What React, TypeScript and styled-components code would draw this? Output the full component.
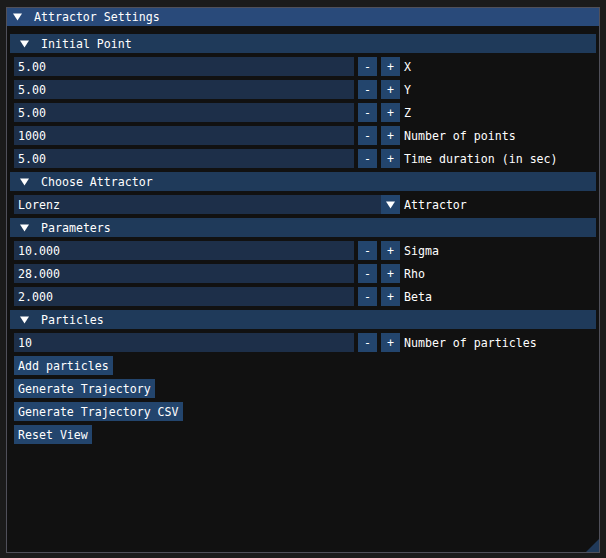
import React from "react";
import styled, { createGlobalStyle } from "styled-components";

const Global = createGlobalStyle`
  body {
    margin: 0;
    background: #1b1b1b;
    font-family: "DejaVu Sans Mono", "Liberation Mono", monospace;
    font-size: 11.6px;
    color: #ffffff;
  }
`;

const Arrow = ({ size = 9 }: { size?: number }) => (
  <svg width={size} height={8} viewBox="0 0 9 8">
    <polygon points="0,0.5 9,0.5 4.5,7.5" fill="#fff" />
  </svg>
);

const StepRow = ({ value, label }: { value: string; label: string }) => (
  <Row>
    <Field>{value}</Field>
    <SmallButton>-</SmallButton>
    <SmallButton>+</SmallButton>
    <Label>{label}</Label>
  </Row>
);

const App = () => {
  return (
    <>
      <Global />
      <Window>
        <TitleBar>
          <Arrow />
          <Caption>Attractor Settings</Caption>
        </TitleBar>
        <Body>
          <Header>
            <Arrow />
            <Caption>Initial Point</Caption>
          </Header>
          <StepRow value="5.00" label="X" />
          <StepRow value="5.00" label="Y" />
          <StepRow value="5.00" label="Z" />
          <StepRow value="1000" label="Number of points" />
          <StepRow value="5.00" label="Time duration (in sec)" />

          <Header>
            <Arrow />
            <Caption>Choose Attractor</Caption>
          </Header>
          <Row>
            <Combo>
              <ComboValue>Lorenz</ComboValue>
              <ComboButton>
                <Arrow />
              </ComboButton>
            </Combo>
            <Label>Attractor</Label>
          </Row>

          <Header>
            <Arrow />
            <Caption>Parameters</Caption>
          </Header>
          <StepRow value="10.000" label="Sigma" />
          <StepRow value="28.000" label="Rho" />
          <StepRow value="2.000" label="Beta" />

          <Header>
            <Arrow />
            <Caption>Particles</Caption>
          </Header>
          <StepRow value="10" label="Number of particles" />
          <Button>Add particles</Button>
          <Button>Generate Trajectory</Button>
          <Button>Generate Trajectory CSV</Button>
          <Button>Reset View</Button>
        </Body>
        <Grip />
      </Window>
    </>
  );
};

export default App;

const Window = styled.div`
  position: relative;
  margin: 7px 0 0 6px;
  width: 594px;
  height: 546px;
  background: #111111;
  outline: 1px solid #50505a;
  outline-offset: -1px;
  box-sizing: border-box;
`;

const TitleBar = styled.div`
  height: 19px;
  background: #294a7a;
  display: flex;
  align-items: center;
  gap: 12px;
  padding-left: 7px;
  white-space: pre;
`;

const Caption = styled.span`
  padding-top: 2px;
  line-height: 17px;
`;

const Body = styled.div`
  display: flex;
  flex-direction: column;
  gap: 4px;
  padding: 8px;
`;

const Header = styled.div`
  height: 19px;
  margin: 0 -4px;
  background: #1f3a5a;
  display: flex;
  align-items: center;
  gap: 12px;
  padding-left: 10px;
  white-space: pre;
`;

const Row = styled.div`
  display: flex;
  align-items: center;
  gap: 4px;
  height: 19px;
`;

const Field = styled.div`
  width: 340px;
  height: 19px;
  line-height: 17px;
  padding: 2px 0 0 4px;
  box-sizing: border-box;
  background: #1d2f49;
`;

const SmallButton = styled.div`
  width: 19px;
  height: 19px;
  line-height: 17px;
  padding-top: 2px;
  box-sizing: border-box;
  text-align: center;
  background: #23456d;
`;

const Label = styled.div`
  line-height: 17px;
  padding-top: 2px;
  white-space: pre;
`;

const Combo = styled.div`
  width: 386px;
  height: 19px;
  display: flex;
`;

const ComboValue = styled.div`
  flex: 1;
  line-height: 17px;
  padding: 2px 0 0 4px;
  background: #1d2f49;
`;

const ComboButton = styled.div`
  width: 19px;
  height: 19px;
  display: flex;
  align-items: center;
  justify-content: center;
  background: #23456d;
`;

const Button = styled.div`
  align-self: flex-start;
  height: 19px;
  line-height: 17px;
  padding: 2px 4px 0;
  box-sizing: border-box;
  background: #23456d;
  white-space: pre;
`;

const Grip = styled.div`
  position: absolute;
  right: 1px;
  bottom: 1px;
  width: 13px;
  height: 13px;
  background: #213a5a;
  clip-path: polygon(100% 0, 100% 100%, 0 100%);
`;
